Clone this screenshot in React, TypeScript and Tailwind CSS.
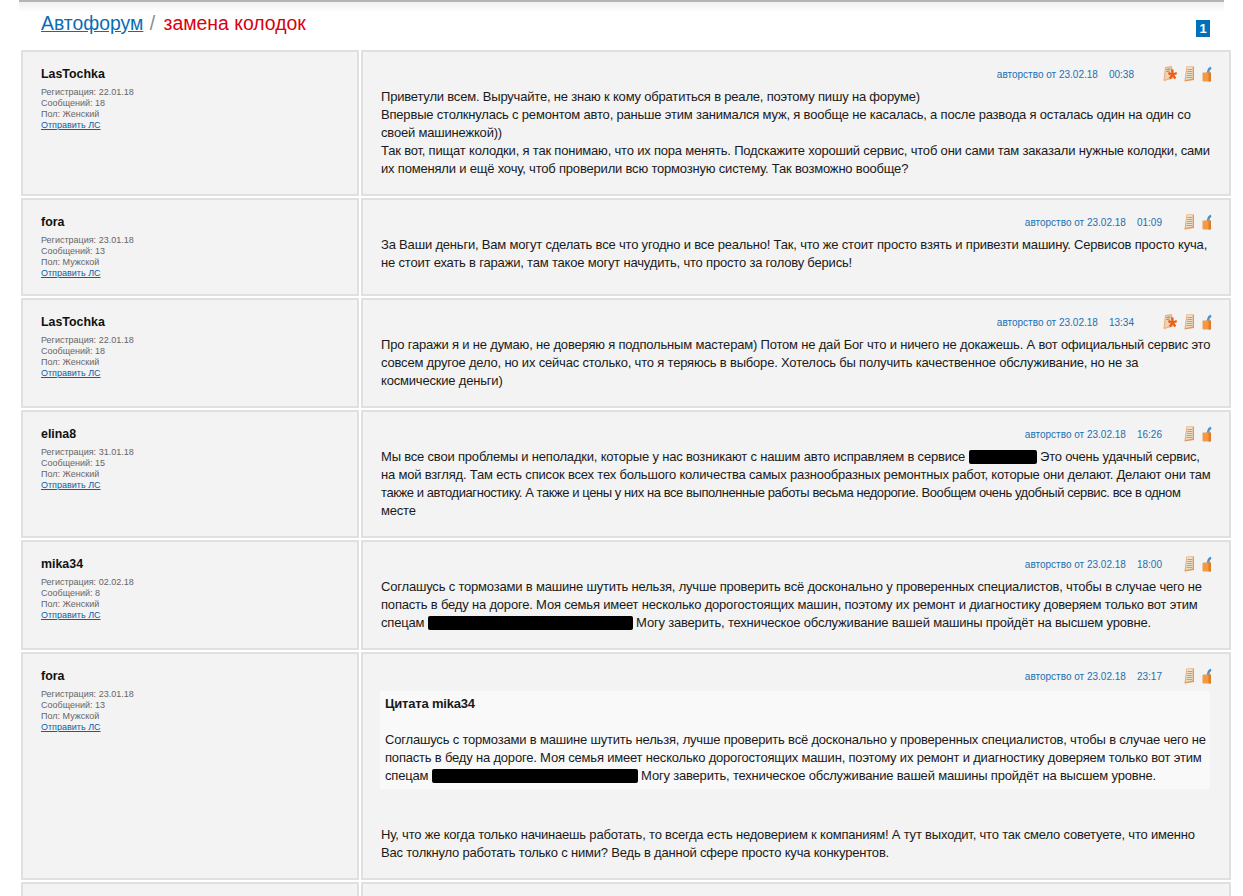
const FONT = "font-['Liberation_Sans',Arial,sans-serif]";

function Redacted({ w }: { w: number }) {
    return <span className="inline-block h-[14px] rounded-[2px] bg-black align-[-3px]" style={{ width: w }} />;
}

const POSTS = [
    {
        user: "LasTochka", reg: "22.01.18", count: 18, sex: "Женский", time: "00:38", report: true,
        body: (
            <>
                Приветули всем. Выручайте, не знаю к кому обратиться в реале, поэтому пишу на форуме)<br />
                Впервые столкнулась с ремонтом авто, раньше этим занимался муж, я вообще не касалась, а после развода я осталась один на один со своей машинежкой))<br />
                Так вот, пищат колодки, я так понимаю, что их пора менять. Подскажите хороший сервис, чтоб они сами там заказали нужные колодки, сами их поменяли и ещё хочу, чтоб проверили всю тормозную систему. Так возможно вообще?
            </>
        ),
    },
    {
        user: "fora", reg: "23.01.18", count: 13, sex: "Мужской", time: "01:09", report: false,
        body: <>За Ваши деньги, Вам могут сделать все что угодно и все реально! Так, что же стоит просто взять и привезти машину. Сервисов просто куча, не стоит ехать в гаражи, там такое могут начудить, что просто за голову берись!</>,
    },
    {
        user: "LasTochka", reg: "22.01.18", count: 18, sex: "Женский", time: "13:34", report: true,
        body: <>Про гаражи я и не думаю, не доверяю я подпольным мастерам) Потом не дай Бог что и ничего не докажешь. А вот официальный сервис это совсем другое дело, но их сейчас столько, что я теряюсь в выборе. Хотелось бы получить качественное обслуживание, но не за космические деньги)</>,
    },
    {
        user: "elina8", reg: "31.01.18", count: 15, sex: "Женский", time: "16:26", report: false,
        body: <>Мы все свои проблемы и неполадки, которые у нас возникают с нашим авто исправляем в сервисе <Redacted w={68} /> Это очень удачный сервис, на мой взгляд. Там есть список всех тех большого количества самых разнообразных ремонтных работ, которые они делают. Делают они там <span className="tracking-[-0.43px]">также и автодиагностику. А также и цены у них на все выполненные работы весьма недорогие. Вообщем очень удобный сервис. все в одном</span> месте</>,
    },
    {
        user: "mika34", reg: "02.02.18", count: 8, sex: "Женский", time: "18:00", report: false,
        body: <>Соглашусь с тормозами в машине шутить нельзя, лучше проверить всё досконально у проверенных специалистов, чтобы в случае чего не попасть в беду на дороге. Моя семья имеет несколько дорогостоящих машин, поэтому их ремонт и диагностику доверяем только вот этим спецам <Redacted w={205} /> Могу заверить, техническое обслуживание вашей машины пройдёт на высшем уровне.</>,
    },
    {
        user: "fora", reg: "23.01.18", count: 13, sex: "Мужской", time: "23:17", report: false,
        body: (
            <>
                <div className="mt-px -ml-px mr-px bg-[#f9f9f9] pl-[5px] pr-[2px] pt-[4px] pb-[4px]">
                    <b>Цитата mika34</b><br /><br />
                    Соглашусь с тормозами в машине шутить нельзя, лучше проверить всё досконально у проверенных специалистов, чтобы в случае чего не попасть в беду на дороге. Моя семья имеет несколько дорогостоящих машин, поэтому их ремонт и диагностику доверяем только вот этим спецам <Redacted w={206} /> Могу заверить, техническое обслуживание вашей машины пройдёт на высшем уровне.
                </div>
                <div className="mt-[37px]">Ну, что же когда только начинаешь работать, то всегда есть недоверием к компаниям! А тут выходит, что так смело советуете, что именно Вас толкнуло работать только с ними? Ведь в данной сфере просто куча конкурентов.</div>
            </>
        ),
    },
];

function ReportIcon() {
    return (
        <svg width="14" height="18" viewBox="0 0 14 18" className="ml-[7px] mr-[7px] shrink-0">
            <path d="M2.500 2.500 8.500 1.500 10 13 1 15.500z" fill="#ecd3b4" stroke="#eaa26a" strokeWidth="0.9" />
            <path d="M3.500 4.500l4-.7M3.500 6.500l3-.5" stroke="#7e8c88" strokeWidth="1" />
            <path d="M7.800 4.500h2.700l.1 3.400 2.900-1 .5 2.400-2.600.8 1.900 2.700-2 1.400-1.600-2.700-2 2.700-1.900-1.500 2-2.500-2.900-.9.8-2.300 2.800 1.100z" fill="#e8601a" />
        </svg>
    );
}

function DocIcon() {
    return (
        <svg width="10" height="18" viewBox="0 0 10 18" className="mr-[8px] shrink-0">
            <path d="M2.500 1.500H10v13.500L0.500 16.500z" fill="#ee9650" />
            <path d="M3 2h5.700v11.500L1.500 15z" fill="#e6e0cd" />
            <path d="M3.500 4.500h4.700M3.300 6.500h4.900M3 8.500h5.200M2.700 10.500h5.500M2.500 12.500h5.700" stroke="#8f9a90" strokeWidth="0.8" />
        </svg>
    );
}

function LockIcon() {
    return (
        <svg width="10" height="18" viewBox="0 0 10 18" className="shrink-0">
            <path d="M4.500 8 6 3.500 8.500 1.500 9.500 3.500 7.500 6V8" fill="#4d93cc" />
            <rect x="0.500" y="7.500" width="8.500" height="9" rx="1" fill="#f39a45" />
            <rect x="6.500" y="7.500" width="2.500" height="9" fill="#e07a25" />
        </svg>
    );
}

function Post({ post }: { post: (typeof POSTS)[number] }) {
    return (
        <div className="flex gap-[2px]">
            <div className="w-[338px] shrink-0 border-2 border-[#e0e0e0] bg-[#f3f3f3] pl-[18px] pt-[14px] pb-[15px]">
                <div className="text-[12.4px] leading-[16px] font-bold text-[#111]">{post.user}</div>
                <div className="mt-[5px] text-[9px] leading-[11px] text-[#666]">
                    <div>Регистрация: {post.reg}</div>
                    <div>Сообщений: {post.count}</div>
                    <div>Пол: {post.sex}</div>
                    <a href="#" className="text-[#0a5fa8] underline">Отправить ЛС</a>
                </div>
            </div>
            <div className="min-w-0 flex-1 border-2 border-[#e0e0e0] bg-[#f3f3f3] px-[18px] pb-[16px]">
                <div className="flex h-[36px] items-center justify-end -mr-px pt-[8px]">
                    <span className="mr-[22px] whitespace-pre text-[10px] text-[#1c6fb1]">{"авторство от 23.02.18    " + post.time}</span>
                    {post.report && <ReportIcon />}
                    <DocIcon />
                    <LockIcon />
                </div>
                <div className="text-[13px] leading-[18px] tracking-[-0.19px] text-[#1a1a1a]">{post.body}</div>
            </div>
        </div>
    );
}

export default function App() {
    return (
        <div className={`${FONT} h-[896px] overflow-hidden bg-white`}>
            <div className="mx-[19px] h-[12px] border-t-2 border-[#b5b5b5] bg-gradient-to-b from-[#f0f0f0] to-white -mb-[12px]" />
            <div className="flex h-[50px] items-start justify-between pl-[41px] pr-[33px]">
                <h1 className="pt-[9px] text-[19.4px] leading-[28px] font-normal">
                    <a href="#" className="text-[#0a6db3] underline">Автофорум</a>
                    <span className="mr-[3px] ml-[1px] text-[#8a8a8a]"> / </span>
                    <span className="text-[#d9000f]">замена колодок</span>
                </h1>
                <span className="mt-[20px] flex h-[17px] w-[14px] items-center justify-center bg-[#0070b8] text-[13px] font-bold text-white">1</span>
            </div>
            <div className="ml-[21px] mr-[12px] flex flex-col gap-[2px]">
                {POSTS.map((post, i) => <Post key={i} post={post} />)}
                <div className="flex gap-[2px]">
                    <div className="h-[40px] w-[338px] shrink-0 border-2 border-[#e0e0e0] bg-[#f3f3f3]" />
                    <div className="h-[40px] flex-1 border-2 border-[#e0e0e0] bg-[#f3f3f3]" />
                </div>
            </div>
        </div>
    );
}
